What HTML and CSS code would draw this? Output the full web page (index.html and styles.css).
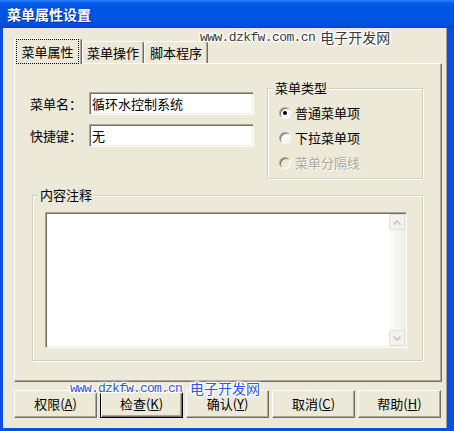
FILE: index.html
```html
<!DOCTYPE html>
<html lang="zh-CN">
<head>
  <meta charset="UTF-8">
  <title>菜单属性设置</title>
  <link rel="stylesheet" href="styles.css">
</head>
<body>
  <div class="window">
    <div class="titlebar">菜单属性设置</div>
    <div class="frame">
      <div class="client">
        <div class="tabs">
          <div class="tab tab-props active"><span class="focus">菜单属性</span></div>
          <div class="tab tab-op">菜单操作</div>
          <div class="tab tab-script">脚本程序</div>
        </div>

        <div class="panel">
          <div class="top-row">
            <div class="fields">
              <label>菜单名：</label>
              <div class="edit">循环水控制系统</div>
              <label>快捷键：</label>
              <div class="edit">无</div>
            </div>
            <div class="group type-group">
              <div class="group-title">菜单类型</div>
              <div class="radio checked"><span class="radio-box"></span>普通菜单项</div>
              <div class="radio"><span class="radio-box"></span>下拉菜单项</div>
              <div class="radio disabled"><span class="radio-box"></span>菜单分隔线</div>
            </div>
          </div>

          <div class="group note-group">
            <div class="group-title">内容注释</div>
            <div class="memo">
              <div class="memo-text"></div>
              <div class="scrollbar">
                <div class="sb-btn">
                  <svg width="8" height="5" viewBox="0 0 8 5"><path d="M0.5 4.5 L4 1 L7.5 4.5" fill="none" stroke="#C8C6BA" stroke-width="1.6"/></svg>
                </div>
                <div class="sb-btn">
                  <svg width="8" height="5" viewBox="0 0 8 5"><path d="M0.5 0.5 L4 4 L7.5 0.5" fill="none" stroke="#C8C6BA" stroke-width="1.6"/></svg>
                </div>
              </div>
            </div>
          </div>
        </div>

        <div class="buttons">
          <button class="btn">权限(<u>A</u>)</button>
          <button class="btn default">检查(<u>K</u>)</button>
          <button class="btn">确认(<u>Y</u>)</button>
          <button class="btn">取消(<u>C</u>)</button>
          <button class="btn">帮助(<u>H</u>)</button>
        </div>
      </div>
    </div>

    <div class="watermark wm-top">www.dzkfw.com.cn<span class="cn">电子开发网</span></div>
    <div class="watermark wm-bottom">www.dzkfw.com.cn<span class="cn">电子开发网</span></div>
  </div>
</body>
</html>
```

FILE: styles.css
```css
* { box-sizing: border-box; }

body {
  margin: 0;
  background: #fff;
  font-family: "Noto Sans CJK SC", sans-serif;
  font-size: 13px;
  color: #000;
}

.window {
  position: relative;
  width: 454px;
  height: 431px;
  display: flex;
  flex-direction: column;
  overflow: hidden;
}

.titlebar {
  flex: none;
  height: 28px;
  padding: 0 0 0 7px;
  line-height: 28px;
  color: #fff;
  font-size: 14px;
  font-weight: bold;
  text-shadow: 1px 1px 0 #0B2C9E;
  background: linear-gradient(180deg, #2D86FF 0%, #0A5CEB 10%, #0055E5 30%, #0054E3 70%, #0150DC 90%, #0444CB 100%);
}

.frame {
  flex: 1;
  display: flex;
  border-style: solid;
  border-color: #0A4EE3;
  border-width: 0 7px 3px 3px;
}

.client {
  flex: 1;
  display: flex;
  flex-direction: column;
  padding: 10px 4px 10px 11px;
  background: #ECE9D8;
  border-right: 1px solid #A5A292;
}

/* tabs */
.tabs {
  display: flex;
  align-items: flex-end;
  height: 25px;
  position: relative;
  z-index: 1;
}
.tab {
  height: 22px;
  display: flex;
  align-items: center;
  justify-content: center;
  line-height: 16px;
  background: #ECE9D8;
  border: 1px solid;
  border-bottom: 0;
  border-color: #fff #716F64 transparent #fff;
  border-radius: 3px 3px 0 0;
  box-shadow: inset -1px 0 0 #ACA899;
}
.tab-props { width: 68px; }
.tab-op { width: 62px; }
.tab-script { width: 64px; }
.tab.active {
  height: 26px;
  margin-bottom: -1px;
  padding: 0 2px 0 1px;
  align-items: stretch;
}
.tab .focus {
  flex: 1;
  display: flex;
  align-items: center;
  justify-content: center;
  border: 1px dotted #000;
}

.panel {
  flex: none;
  height: 319px;
  padding: 0 18px 0 17px;
  border: 1px solid;
  border-color: #fff #716F64 #716F64 #fff;
  box-shadow: inset -1px -1px 0 #ACA899;
}

.top-row {
  display: flex;
  justify-content: space-between;
  align-items: flex-start;
}

.fields {
  display: grid;
  grid-template-columns: 59px 165px;
  row-gap: 9px;
  align-items: center;
  margin: 28px 0 0 -2px;
}
.fields label { line-height: 16px; }

.edit {
  height: 23px;
  padding: 0 2px;
  line-height: 21px;
  background: #fff;
  border: 1px solid;
  border-color: #ACA899 #fff #fff #ACA899;
  box-shadow: inset 1px 1px 0 #716F64, inset -1px -1px 0 #F1EFE2;
}

/* group boxes */
.group {
  border: 1px solid #D0D0BF;
  box-shadow: inset 1px 1px 0 #fff, 1px 1px 0 #fff;
}
.group-title {
  width: max-content;
  padding: 0 2px;
  line-height: 14px;
  background: #ECE9D8;
}

.type-group {
  width: 156px;
  margin-top: 24px;
  padding: 0 0 3px 11px;
}
.type-group .group-title { margin: -8px 0 5px -6px; }

.radio {
  display: flex;
  align-items: center;
  gap: 4px;
  height: 25px;
  line-height: 16px;
}
.radio-box {
  position: relative;
  width: 12px;
  height: 12px;
  border-radius: 50%;
  background: #fff;
  border: 1px solid;
  border-color: #ACA899 #fff #fff #ACA899;
  box-shadow: inset 1px 1px 0 #716F64, inset -1px -1px 0 #F1EFE2;
}
.radio.checked .radio-box::after {
  content: "";
  position: absolute;
  left: 3px;
  top: 3px;
  width: 4px;
  height: 4px;
  border-radius: 50%;
  background: #000;
}
.radio.disabled {
  color: #ACA899;
  text-shadow: 1px 1px 0 #fff;
}
.radio.disabled .radio-box { background: #ECE9D8; }

.note-group {
  margin-top: 16px;
  padding: 0 15px 12px 12px;
}
.note-group .group-title { margin: -8px 0 10px -7px; }

.memo {
  display: flex;
  height: 136px;
  background: #fff;
  border: 1px solid;
  border-color: #ACA899 #fff #fff #ACA899;
  box-shadow: inset 1px 1px 0 #716F64, inset -1px -1px 0 #F1EFE2;
  padding: 1px;
}
.memo-text { flex: 1; }

.scrollbar {
  width: 16px;
  display: flex;
  flex-direction: column;
  justify-content: space-between;
  background: linear-gradient(90deg, #FEFEFC, #EEEDE6);
}
.sb-btn {
  height: 16px;
  display: flex;
  align-items: center;
  justify-content: center;
  background: #F3F2EC;
  border: 1px solid #E2E0D6;
  border-radius: 2px;
}

/* buttons */
.buttons {
  display: flex;
  gap: 3px;
  margin-top: 8px;
}
.btn {
  width: 83px;
  height: 28px;
  padding: 0;
  font: inherit;
  line-height: 14px;
  color: #000;
  background: #ECE9D8;
  border: 1px solid;
  border-color: #fff #716F64 #716F64 #fff;
  box-shadow: inset -1px -1px 0 #ACA899;
}
.btn.default {
  border-color: #000;
  box-shadow: inset 1px 1px 0 #fff, inset -1px -1px 0 #716F64, inset -2px -2px 0 #ACA899;
}

/* site watermark stamped over the screenshot */
.watermark {
  position: absolute;
  display: flex;
  align-items: center;
  height: 13px;
  font-family: "Liberation Mono", monospace;
  font-size: 13px;
  line-height: 13px;
  white-space: nowrap;
  text-shadow: 1px 0 #fff, -1px 0 #fff, 0 1px #fff, 0 -1px #fff,
    1px 1px #fff, -1px -1px #fff, 1px -1px #fff, -1px 1px #fff,
    0 0 3px #fff, 0 0 4px #fff, 0 0 5px #fff;
}
.watermark .cn {
  font-family: "Noto Sans CJK SC", sans-serif;
  font-size: 14px;
  line-height: 13px;
  letter-spacing: 0;
}
.wm-top {
  left: 200px;
  top: 31px;
  color: #3A3A3A;
  letter-spacing: -0.6px;
}
.wm-top .cn { margin-left: 5px; }
.wm-bottom {
  left: 70px;
  top: 382px;
  color: #2F54F5;
  letter-spacing: -0.8px;
}
.wm-bottom .cn { margin-left: 8px; }
```
